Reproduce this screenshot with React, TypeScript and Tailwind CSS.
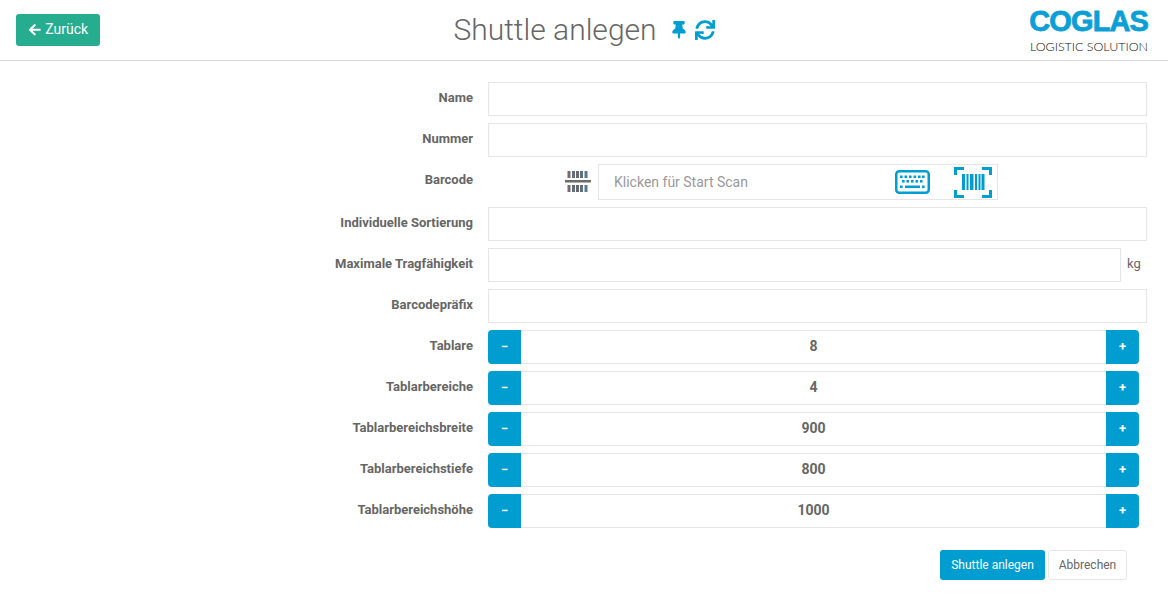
import React from "react";
import { FaArrowLeft, FaThumbtack, FaSync } from "react-icons/fa";

function Label({ children }: { children: React.ReactNode }) {
  return (
    <div className="w-[473px] shrink-0 pt-[8px] text-right text-[13px] leading-[16px] font-bold text-[#666]">
      {children}
    </div>
  );
}

function TextRow({ label, suffix }: { label: string; suffix?: string }) {
  return (
    <div className="flex h-[34px] mb-[7px]">
      <Label>{label}</Label>
      <div className="ml-[15px] flex flex-1 pr-[21px]">
        <div className="flex-1 border border-[#e6e6e6] bg-white" />
        {suffix && (
          <div className="w-[26px] pl-[6px] pt-[8px] text-[13px] leading-[16px] text-[#666]">{suffix}</div>
        )}
      </div>
    </div>
  );
}

function StepRow({ label, value }: { label: string; value: string }) {
  return (
    <div className="flex h-[34px] mb-[7px]">
      <Label>{label}</Label>
      <div className="ml-[15px] flex flex-1 pr-[29px]">
        <div className="flex w-[33px] items-center justify-center rounded-l-[4px] bg-[#009dd1] pb-[1px] text-[13px] font-bold text-white">
          −
        </div>
        <div className="flex flex-1 items-center justify-center border-y border-[#e6e6e6] pb-[1px] text-[14px] font-bold text-[#666]">
          {value}
        </div>
        <div className="flex w-[33px] items-center justify-center rounded-r-[4px] bg-[#009dd1] pb-[1px] text-[13px] font-bold text-white">
          +
        </div>
      </div>
    </div>
  );
}

function ScanToggle() {
  const xs = [2.5, 7, 11, 15, 19.5];
  const cs = ["#7a6a6e", "#5f6f80", "#666a70", "#5f6f80", "#5a7890"];
  return (
    <svg width="26" height="22" viewBox="0 0 26 22" className="block">
      {xs.map((x, i) => (
        <rect key={`t${x}`} x={x} y="0" width="3" height="7" fill={cs[i]} />
      ))}
      <rect x="0" y="9" width="26" height="2.5" fill="#6b6b6b" />
      {xs.map((x, i) => (
        <rect key={`b${x}`} x={x} y="14" width="3" height="7" fill={cs[i]} />
      ))}
    </svg>
  );
}

function KeyboardIcon() {
  return (
    <svg width="35" height="24" viewBox="0 0 35 24" className="block">
      <rect x="1.25" y="1.25" width="32.5" height="21.5" rx="3" fill="none" stroke="#009dd1" strokeWidth="2.5" />
      <g fill="#009dd1">
        {[5, 9.5, 14, 18.5, 23, 27].map((x) => (
          <rect key={x} x={x} y="5.5" width="2.6" height="2.6" />
        ))}
        {[7, 11.5, 16, 20.5, 25].map((x) => (
          <rect key={x} x={x} y="10" width="2.6" height="2.6" />
        ))}
        <rect x="5" y="15.5" width="2.6" height="2.6" />
        <rect x="10" y="15.5" width="15" height="2.6" />
        <rect x="27" y="15.5" width="2.6" height="2.6" />
      </g>
    </svg>
  );
}

function BarcodeIcon() {
  return (
    <svg width="38" height="31" viewBox="0 0 38 31" className="block">
      <g fill="none" stroke="#009dd1" strokeWidth="3">
        <path d="M1.5 8V1.5H10" />
        <path d="M28 1.5H36.5V8" />
        <path d="M1.5 23V29.5H10" />
        <path d="M28 29.5H36.5V23" />
      </g>
      <g fill="#009dd1">
        <rect x="8" y="7" width="3" height="16" />
        <rect x="12.5" y="7" width="2" height="16" />
        <rect x="16" y="7" width="3.5" height="16" />
        <rect x="21" y="7" width="2" height="16" />
        <rect x="24.5" y="7" width="2" height="16" />
        <rect x="27.5" y="7" width="3" height="16" />
      </g>
    </svg>
  );
}

export default function App() {
  return (
    <div className="min-h-[596px] bg-white font-['Roboto',sans-serif]">
      <header className="flex h-[61px] items-start justify-between border-b border-[#d9d9d9] pl-4 pr-5">
        <div className="w-[300px] pt-[14px]">
          <button className="flex h-[32px] w-[84px] items-center justify-center gap-[4px] rounded-[3px] bg-[#26ad8f] pb-[1px] text-[14px] text-white">
            <FaArrowLeft className="text-[13.5px]" />
            Zurück
          </button>
        </div>
        <div className="flex flex-1 items-center justify-center pt-[10px] pl-[4px]">
          <h1 className="text-[30px] leading-[40px] font-light text-[#666]">Shuttle anlegen</h1>
          <FaThumbtack className="ml-[13px] text-[18px] text-[#009dd1]" />
          <FaSync className="ml-[7px] text-[20px] text-[#009dd1]" />
        </div>
        <div className="flex w-[300px] flex-col items-end pt-[7px]">
          <div className="font-['Liberation_Sans',sans-serif] text-[29px] leading-[28px] font-bold tracking-[-0.9px] text-[#0a9fd6] [-webkit-text-stroke:0.8px_#0a9fd6]">
            COGLAS
          </div>
          <div className="mt-[3px] font-['Lato',sans-serif] text-[12.5px] leading-[17px] font-light tracking-[-0.03px] text-[#111]">
            LOGISTIC SOLUTION
          </div>
        </div>
      </header>

      <main className="pt-[21px]">
        <TextRow label="Name" />
        <TextRow label="Nummer" />
        <div className="flex h-[36px] mb-[7px]">
          <Label>Barcode</Label>
          <div className="ml-[92px] flex items-center">
            <ScanToggle />
            <div className="ml-[7px] flex h-[36px] w-[400px] items-center border border-[#e6e6e6] pl-[15px]">
              <span className="text-[14px] text-[#999]">Klicken für Start Scan</span>
              <div className="ml-auto mr-[5px] flex items-center gap-[24px]">
                <KeyboardIcon />
                <BarcodeIcon />
              </div>
            </div>
          </div>
        </div>
        <TextRow label="Individuelle Sortierung" />
        <TextRow label="Maximale Tragfähigkeit" suffix="kg" />
        <TextRow label="Barcodepräfix" />
        <StepRow label="Tablare" value="8" />
        <StepRow label="Tablarbereiche" value="4" />
        <StepRow label="Tablarbereichsbreite" value="900" />
        <StepRow label="Tablarbereichstiefe" value="800" />
        <StepRow label="Tablarbereichshöhe" value="1000" />

        <div className="mt-[22px] flex justify-end gap-[3px] pr-[41px]">
          <button className="h-[30px] w-[105px] rounded-[3px] bg-[#009dd1] text-[12px] font-normal text-white">
            Shuttle anlegen
          </button>
          <button className="h-[30px] w-[79px] rounded-[3px] border border-[#e6e6e6] bg-white text-[12px] text-[#666]">
            Abbrechen
          </button>
        </div>
      </main>
    </div>
  );
}
